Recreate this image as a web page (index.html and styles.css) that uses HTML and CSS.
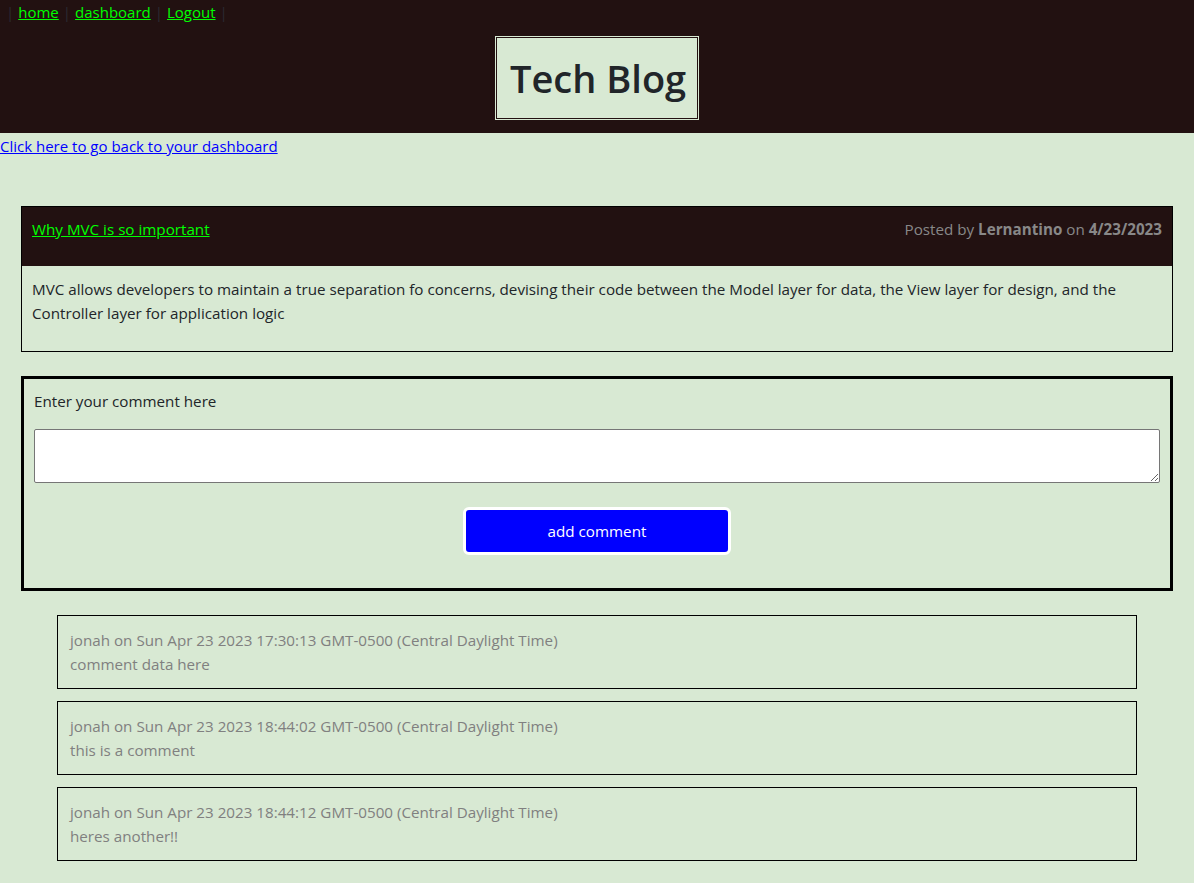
FILE: index.html
```html
<!DOCTYPE html>
<html lang="en">
<head>
<meta charset="utf-8">
<title>Tech Blog</title>
<link rel="stylesheet" href="styles.css">
</head>
<body>
<header class="site-header">
  <nav class="nav">
    <span class="sep">|</span>
    <a href="#" class="nav-link">home</a>
    <span class="sep">|</span>
    <a href="#" class="nav-link">dashboard</a>
    <span class="sep">|</span>
    <a href="#" class="nav-link">Logout</a>
    <span class="sep">|</span>
  </nav>
  <div class="title-wrap">
    <h1 class="site-title">Tech Blog</h1>
  </div>
</header>
<main class="main">
  <a href="#" class="back-link">Click here to go back to your dashboard</a>
  <section class="post">
    <div class="post-head">
      <a href="#" class="post-title">Why MVC is so important</a>
      <span class="post-meta">Posted by <b>Lernantino</b> on <b>4/23/2023</b></span>
    </div>
    <div class="post-body">
      <p>MVC allows developers to maintain a true separation fo concerns, devising their code between the Model layer for data, the View layer for design, and the Controller layer for application logic</p>
    </div>
  </section>
  <form class="comment-form">
    <label class="form-label" for="comment">Enter your comment here</label>
    <textarea id="comment" class="form-input"></textarea>
    <div class="form-actions">
      <button type="button" class="btn">add comment</button>
    </div>
  </form>
  <section class="comments">
    <div class="comment">
      <div>jonah on Sun Apr 23 2023 17:30:13 GMT-0500 (Central Daylight Time)</div>
      <div>comment data here</div>
    </div>
    <div class="comment">
      <div>jonah on Sun Apr 23 2023 18:44:02 GMT-0500 (Central Daylight Time)</div>
      <div>this is a comment</div>
    </div>
    <div class="comment">
      <div>jonah on Sun Apr 23 2023 18:44:12 GMT-0500 (Central Daylight Time)</div>
      <div>heres another!!</div>
    </div>
  </section>
</main>
</body>
</html>
```
FILE: styles.css
```css
* { box-sizing: border-box; }
html, body {
  margin: 0;
  padding: 0;
}
body {
  background: #d8e9d3;
  color: #212529;
  font-family: "Open Sans", "Noto Sans", sans-serif;
  font-size: 15.2px;
  line-height: 24px;
}
.site-header {
  background: #221111;
  height: 133px;
}
.nav {
  display: flex;
  align-items: center;
  gap: 4px;
  padding-left: 6px;
  height: 24px;
  font-size: 15px;
}
.sep { color: #2b2b33; }
.nav-link { color: #00ff00; }
.title-wrap {
  display: flex;
  justify-content: center;
  padding-top: 13px;
}
.site-title {
  margin: 0;
  background: #d8e9d3;
  border: 1px solid #221111;
  outline: 1px solid #d8e9d3;
  padding: 16px 13px;
  font-size: 38px;
  font-weight: 600;
  line-height: 48px;
  color: #212529;
  width: 202px;
  text-align: center;
  white-space: nowrap;
}
.back-link {
  display: block;
  color: #0000ff;
  font-size: 15px;
  line-height: 26px;
}
.post {
  margin: 47px 21px 0;
  border: 1px solid #000;
}
.post-head {
  background: #221111;
  height: 59px;
  display: flex;
  justify-content: space-between;
  align-items: flex-start;
  padding: 10px 10px 0;
}
.post-title { color: #00ff00; }
.post-meta { color: #888888; }
.post-meta b { font-weight: 700; }
.post-body {
  padding: 11px 10px 1px;
}
.post-body p { margin: 0 0 25px; }
.comment-form {
  margin: 24px 21px 0;
  border: 3px solid #000;
  padding: 10px 10px 0;
  display: flex;
  flex-direction: column;
}
.form-label { display: block; }
.form-input {
  margin-top: 16px;
  height: 54px;
  width: 100%;
  border: 1px solid #767676;
  border-radius: 2px;
  background: #fff;
  resize: vertical;
}
.form-actions {
  display: flex;
  justify-content: center;
  padding: 24px 0 33px;
}
.btn {
  width: 268px;
  height: 48px;
  background: #0000ff;
  color: #fff;
  border: 3px solid #fff;
  border-radius: 6px;
  font-family: inherit;
  font-size: 15.2px;
}
.comments {
  margin: 24px 57px 0;
  display: flex;
  flex-direction: column;
  gap: 12px;
  padding-bottom: 20px;
}
.comment {
  border: 1px solid #000;
  padding: 12px;
  color: #808080;
}
```
